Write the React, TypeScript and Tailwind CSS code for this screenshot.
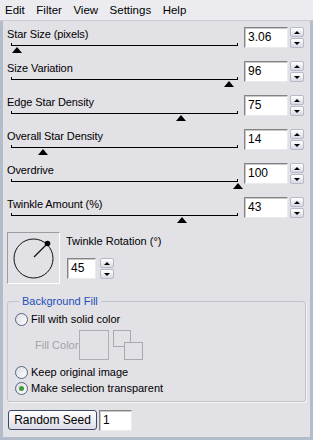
import React from "react";

type SliderRow = {
  label: string;
  value: string;
  pos: number;
};

const sliders: SliderRow[] = [
  { label: "Star Size (pixels)", value: "3.06", pos: 6 },
  { label: "Size Variation", value: "96", pos: 218 },
  { label: "Edge Star Density", value: "75", pos: 170 },
  { label: "Overall Star Density", value: "14", pos: 32 },
  { label: "Overdrive", value: "100", pos: 227 },
  { label: "Twinkle Amount (%)", value: "43", pos: 171 },
];

function Spin() {
  return (
    <div className="flex h-[21px] w-[14px] flex-col gap-px">
      <div className="flex flex-1 items-center justify-center rounded-[2px] border border-[#b4bac8] bg-gradient-to-b from-white to-[#d9dae3]">
        <div className="h-0 w-0 border-x-[3px] border-b-[3px] border-x-transparent border-b-black" />
      </div>
      <div className="flex flex-1 items-center justify-center rounded-[2px] border border-[#b4bac8] bg-gradient-to-b from-white to-[#d9dae3]">
        <div className="h-0 w-0 border-x-[3px] border-t-[3px] border-x-transparent border-t-black" />
      </div>
    </div>
  );
}

function NumBox({ value, width }: { value: string; width: string }) {
  return (
    <div
      className={`${width} h-[21px] border border-b-[#e9e9ee] border-l-[#848484] border-r-[#e9e9ee] border-t-[#848484] bg-white pl-[3px] text-[12px] leading-[19px] text-black shadow-[inset_1px_1px_0_#c8c8c8]`}
    >
      {value}
    </div>
  );
}

function Radio({ label, checked }: { label: string; checked?: boolean }) {
  return (
    <div className="flex h-[16px] items-center gap-[3px]">
      <div className="flex h-[13px] w-[13px] items-center justify-center rounded-full border border-[#55657e] bg-gradient-to-br from-[#dcdde3] to-white">
        {checked ? (
          <div className="h-[5px] w-[5px] rounded-full bg-[#3f9e3a]" />
        ) : null}
      </div>
      <span>{label}</span>
    </div>
  );
}

export default function App() {
  return (
    <div className="flex h-[440px] w-[313px] flex-col bg-[#b3bccb] font-['Liberation_Sans',Arial,sans-serif] text-[11px] text-black">
      <div className="flex h-[21px] shrink-0 gap-[11.5px] border-b border-[#c9c9d1] bg-[#ececf0] pl-[5px] text-[11.5px] leading-[20px]">
        <span>Edit</span>
        <span>Filter</span>
        <span>View</span>
        <span>Settings</span>
        <span>Help</span>
      </div>

      <div className="mx-[3px] mb-[3px] flex flex-1 flex-col bg-[#e2e1e6]">
        {sliders.map((s) => (
          <div key={s.label} className="flex h-[34px]">
            <div className="w-[241px]">
              <div className="pl-[4px] pt-[6px] leading-[14px] tracking-[-0.1px]">{s.label}</div>
              <div className="relative ml-[8px] mt-[4px] h-px w-[227px] bg-black">
                <div className="absolute bottom-0 left-0 h-[3px] w-px bg-black" />
                <div className="absolute bottom-0 right-0 h-[3px] w-px bg-black" />
                <div
                  className="absolute top-[2px] h-0 w-0 border-x-[5px] border-b-[6px] border-x-transparent border-b-black"
                  style={{ left: s.pos - 5 }}
                />
              </div>
            </div>
            <div className="mt-[6px] flex gap-[2px]">
              <NumBox value={s.value} width="w-[44px]" />
              <Spin />
            </div>
          </div>
        ))}

        <div className="ml-[4px] mt-[7px] flex">
          <div className="flex h-[52px] w-[53px] items-center justify-center border border-b-white border-l-[#9a9aa0] border-r-white border-t-[#9a9aa0]">
            <svg width="44" height="44" viewBox="0 0 44 44">
              <circle cx="21.5" cy="22.5" r="19.5" fill="none" stroke="#111" strokeWidth="1" />
              <line x1="22" y1="21" x2="35" y2="8" stroke="#111" strokeWidth="1.2" />
              <circle cx="35.5" cy="7.5" r="2.8" fill="#000" />
            </svg>
          </div>
          <div className="ml-[6px] flex flex-col">
            <div className="pt-[2px] leading-[14px]">Twinkle Rotation (°)</div>
            <div className="mt-[10px] ml-px flex gap-[4px]">
              <NumBox value="45" width="w-[29px]" />
              <Spin />
            </div>
          </div>
        </div>

        <fieldset className="mx-[4px] mt-[10px] h-[108px] rounded-[3px] border border-[#c3c3ca] px-[7px] shadow-[1px_1px_0_#f4f4f6]">
          <legend className="ml-[4px] px-[3px] leading-[14px] text-[#1f4fb8]">
            Background Fill
          </legend>
          <div className="mt-[3px]">
            <Radio label="Fill with solid color" />
          </div>
          <div className="mt-[3px] flex items-center">
            <span className="ml-[20px] w-[44px] text-[#a3a3a8]">Fill Color</span>
            <div className="h-[30px] w-[30px] border border-[#aeaeb4]" />
            <div className="ml-[4px] h-[30px] w-[30px]">
              <svg width="30" height="30" viewBox="0 0 30 30">
                <rect x="0.5" y="0.5" width="17" height="16" fill="none" stroke="#a8a8ae" />
                <rect x="11.5" y="12.5" width="18" height="17" fill="#e2e1e6" stroke="#a8a8ae" />
              </svg>
            </div>
          </div>
          <div className="mt-[4px]">
            <Radio label="Keep original image" />
          </div>
          <Radio label="Make selection transparent" checked />
        </fieldset>

        <div className="ml-[5px] mt-[8px] flex gap-[2px]">
          <button className="h-[20px] w-[89px] rounded-[3px] border border-[#3c4a66] bg-gradient-to-b from-white to-[#dcdce6] text-[12px] leading-[18px]">
            Random Seed
          </button>
          <NumBox value="1" width="w-[33px]" />
        </div>
      </div>
    </div>
  );
}
